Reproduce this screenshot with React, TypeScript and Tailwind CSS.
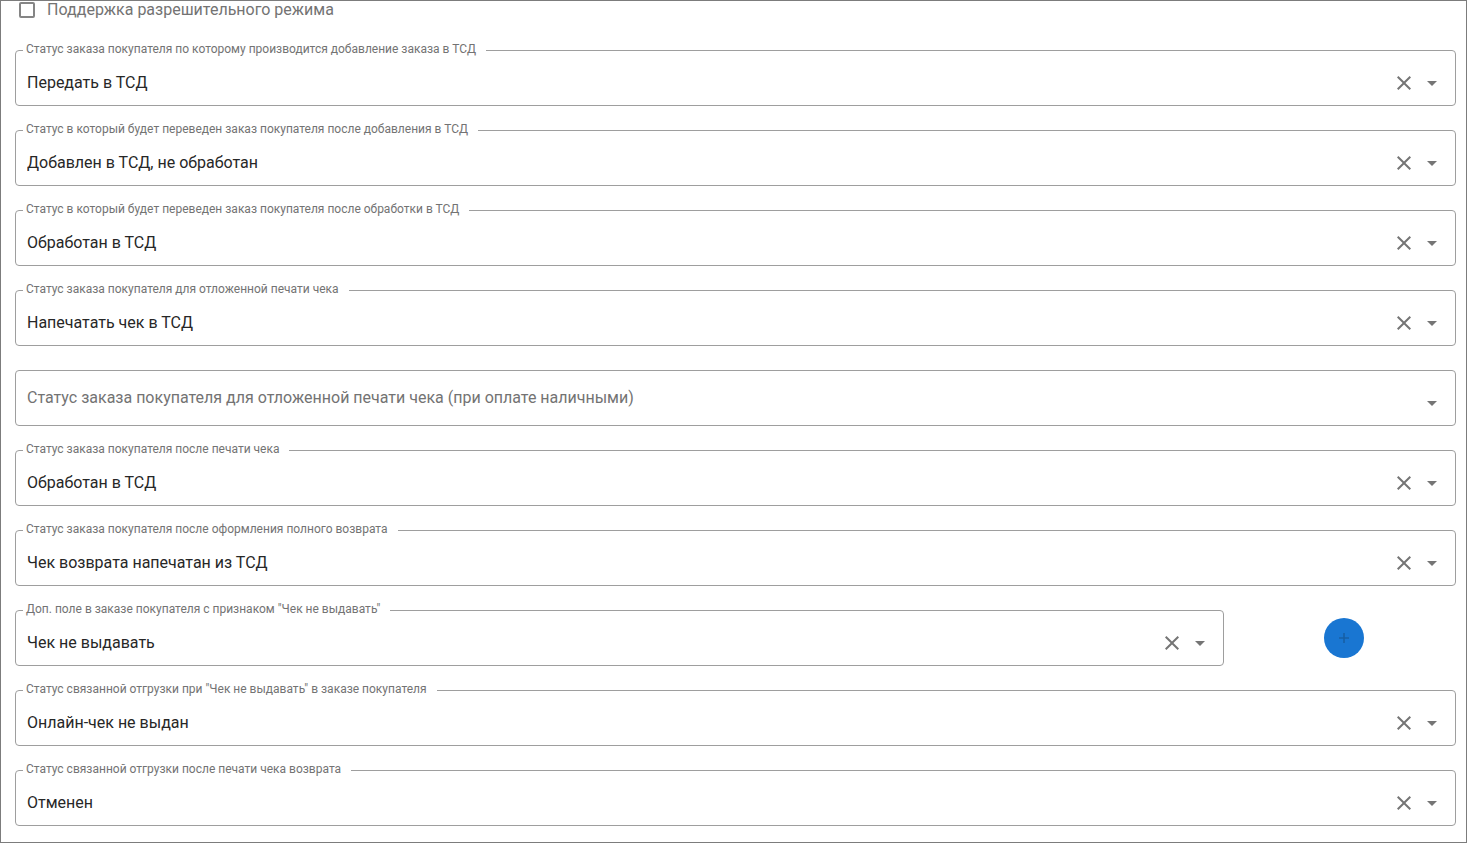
import { useState } from "react";

type Field = {
  id: string;
  label: string;
  value: string;
  addable?: boolean;
};

const fields: Field[] = [
  {
    id: "add-to-tsd",
    label: "Статус заказа покупателя по которому производится добавление заказа в ТСД",
    value: "Передать в ТСД",
  },
  {
    id: "after-add",
    label: "Статус в который будет переведен заказ покупателя после добавления в ТСД",
    value: "Добавлен в ТСД, не обработан",
  },
  {
    id: "after-process",
    label: "Статус в который будет переведен заказ покупателя после обработки в ТСД",
    value: "Обработан в ТСД",
  },
  {
    id: "deferred-print",
    label: "Статус заказа покупателя для отложенной печати чека",
    value: "Напечатать чек в ТСД",
  },
  {
    id: "deferred-print-cash",
    label: "Статус заказа покупателя для отложенной печати чека (при оплате наличными)",
    value: "",
  },
  {
    id: "after-print",
    label: "Статус заказа покупателя после печати чека",
    value: "Обработан в ТСД",
  },
  {
    id: "after-refund",
    label: "Статус заказа покупателя после оформления полного возврата",
    value: "Чек возврата напечатан из ТСД",
  },
  {
    id: "no-receipt-field",
    label: 'Доп. поле в заказе покупателя с признаком "Чек не выдавать"',
    value: "Чек не выдавать",
    addable: true,
  },
  {
    id: "shipment-no-receipt",
    label: 'Статус связанной отгрузки при "Чек не выдавать" в заказе покупателя',
    value: "Онлайн-чек не выдан",
  },
  {
    id: "shipment-after-refund",
    label: "Статус связанной отгрузки после печати чека возврата",
    value: "Отменен",
  },
];

const options = Array.from(new Set(fields.map((f) => f.value).filter(Boolean)));

function SelectField({ id, label, value: initial }: Field) {
  const [value, setValue] = useState(initial);
  const filled = value !== "";

  return (
    <div className="relative flex h-14 min-w-0 flex-1 rounded border border-[#9e9e9e]">
      <label
        htmlFor={id}
        className={
          filled
            ? "absolute -top-2.5 left-[7px] bg-white pl-[3px] pr-2.5 text-xs leading-4 text-[#737373]"
            : "pointer-events-none absolute left-[11px] top-[15px] text-base leading-6 text-[#737373]"
        }
      >
        {label}
      </label>
      <select
        id={id}
        value={value}
        onChange={(e) => setValue(e.target.value)}
        className="w-full appearance-none rounded bg-transparent pb-2 pl-[11px] pr-20 pt-[18px] text-base leading-6 text-[#272727] outline-none"
      >
        <option value="" />
        {options.map((o) => (
          <option key={o} value={o}>
            {o}
          </option>
        ))}
      </select>
      {filled && (
        <button
          type="button"
          aria-label="Очистить"
          onClick={() => setValue("")}
          className="absolute right-[39px] top-5 flex size-6 items-center justify-center text-[#757575]"
        >
          <svg viewBox="0 0 24 24" className="size-6" fill="currentColor">
            <path d="M19 6.41 17.59 5 12 10.59 6.41 5 5 6.41 10.59 12 5 17.59 6.41 19 12 13.41 17.59 19 19 17.59 13.41 12z" />
          </svg>
        </button>
      )}
      <svg
        viewBox="0 0 24 24"
        className="pointer-events-none absolute right-[11px] top-5 size-6 text-[#757575]"
        fill="currentColor"
      >
        <path d="M7 10l5 5 5-5z" />
      </svg>
    </div>
  );
}

export default function App() {
  return (
    <main className="min-h-screen border border-[#7c7c7c] bg-white pb-4 pl-3.5 pr-2.5 font-[Roboto,'Liberation_Sans',sans-serif]">
      <div className="flex h-[49px] items-start">
        <label className="flex items-center gap-3 pl-1 text-base leading-[18px] text-[#737373]">
          <input
            type="checkbox"
            className="size-4 appearance-none rounded-xs border-2 border-[#858585] checked:bg-[#1976d2]"
          />
          Поддержка разрешительного режима
        </label>
      </div>
      <form className="flex flex-col gap-6">
        {fields.map((f) => (
          <div key={f.id} className="flex items-center">
            <SelectField {...f} />
            {f.addable && (
              <div className="flex w-[232px] pl-[100px]">
                <button
                  type="button"
                  aria-label="Добавить"
                  className="flex size-10 items-center justify-center rounded-full bg-[#1976d2] text-[#1760a6]"
                >
                  <svg viewBox="0 0 10 10" className="size-2.5" stroke="currentColor" strokeWidth="1.6">
                    <path d="M5 0v10M0 5h10" />
                  </svg>
                </button>
              </div>
            )}
          </div>
        ))}
      </form>
    </main>
  );
}
